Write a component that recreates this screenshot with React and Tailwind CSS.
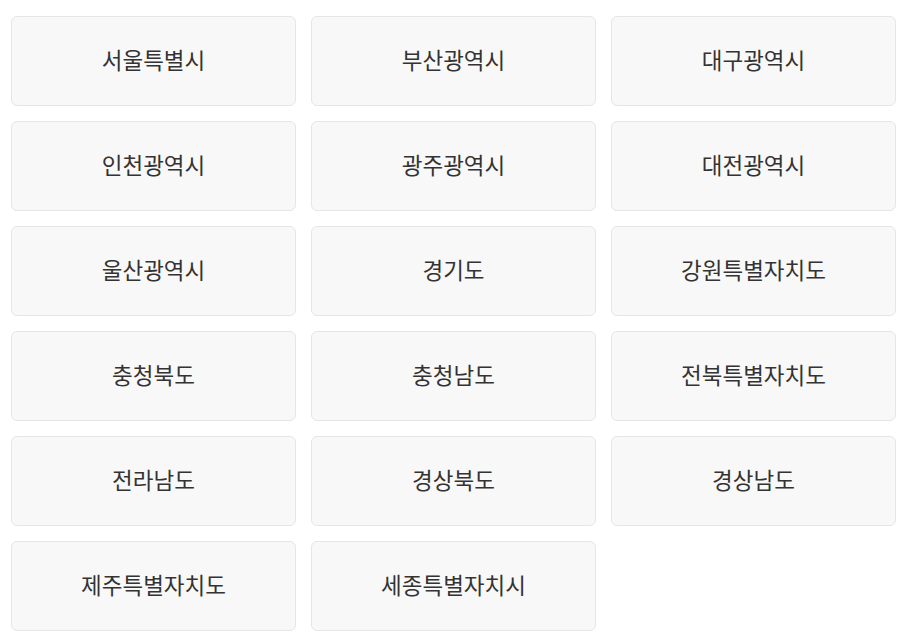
import React from "react";

const regions = [
  "서울특별시",
  "부산광역시",
  "대구광역시",
  "인천광역시",
  "광주광역시",
  "대전광역시",
  "울산광역시",
  "경기도",
  "강원특별자치도",
  "충청북도",
  "충청남도",
  "전북특별자치도",
  "전라남도",
  "경상북도",
  "경상남도",
  "제주특별자치도",
  "세종특별자치시",
];

const App = () => {
  return (
    <div
      className="bg-white pl-[11px] pr-[14px] pt-4 pb-[10px]"
      style={{ fontFamily: '"Noto Sans CJK KR", "Noto Sans", sans-serif' }}
    >
      <div className="grid grid-cols-3 gap-[15px]">
        {regions.map((name) => (
          <button
            key={name}
            type="button"
            className="h-[90px] flex items-center justify-center rounded-md border border-[#e6e6e6] bg-[#f8f8f8] text-[22.5px] leading-none pb-[3px] text-[#333]"
          >
            {name}
          </button>
        ))}
      </div>
    </div>
  );
};

export default App;
